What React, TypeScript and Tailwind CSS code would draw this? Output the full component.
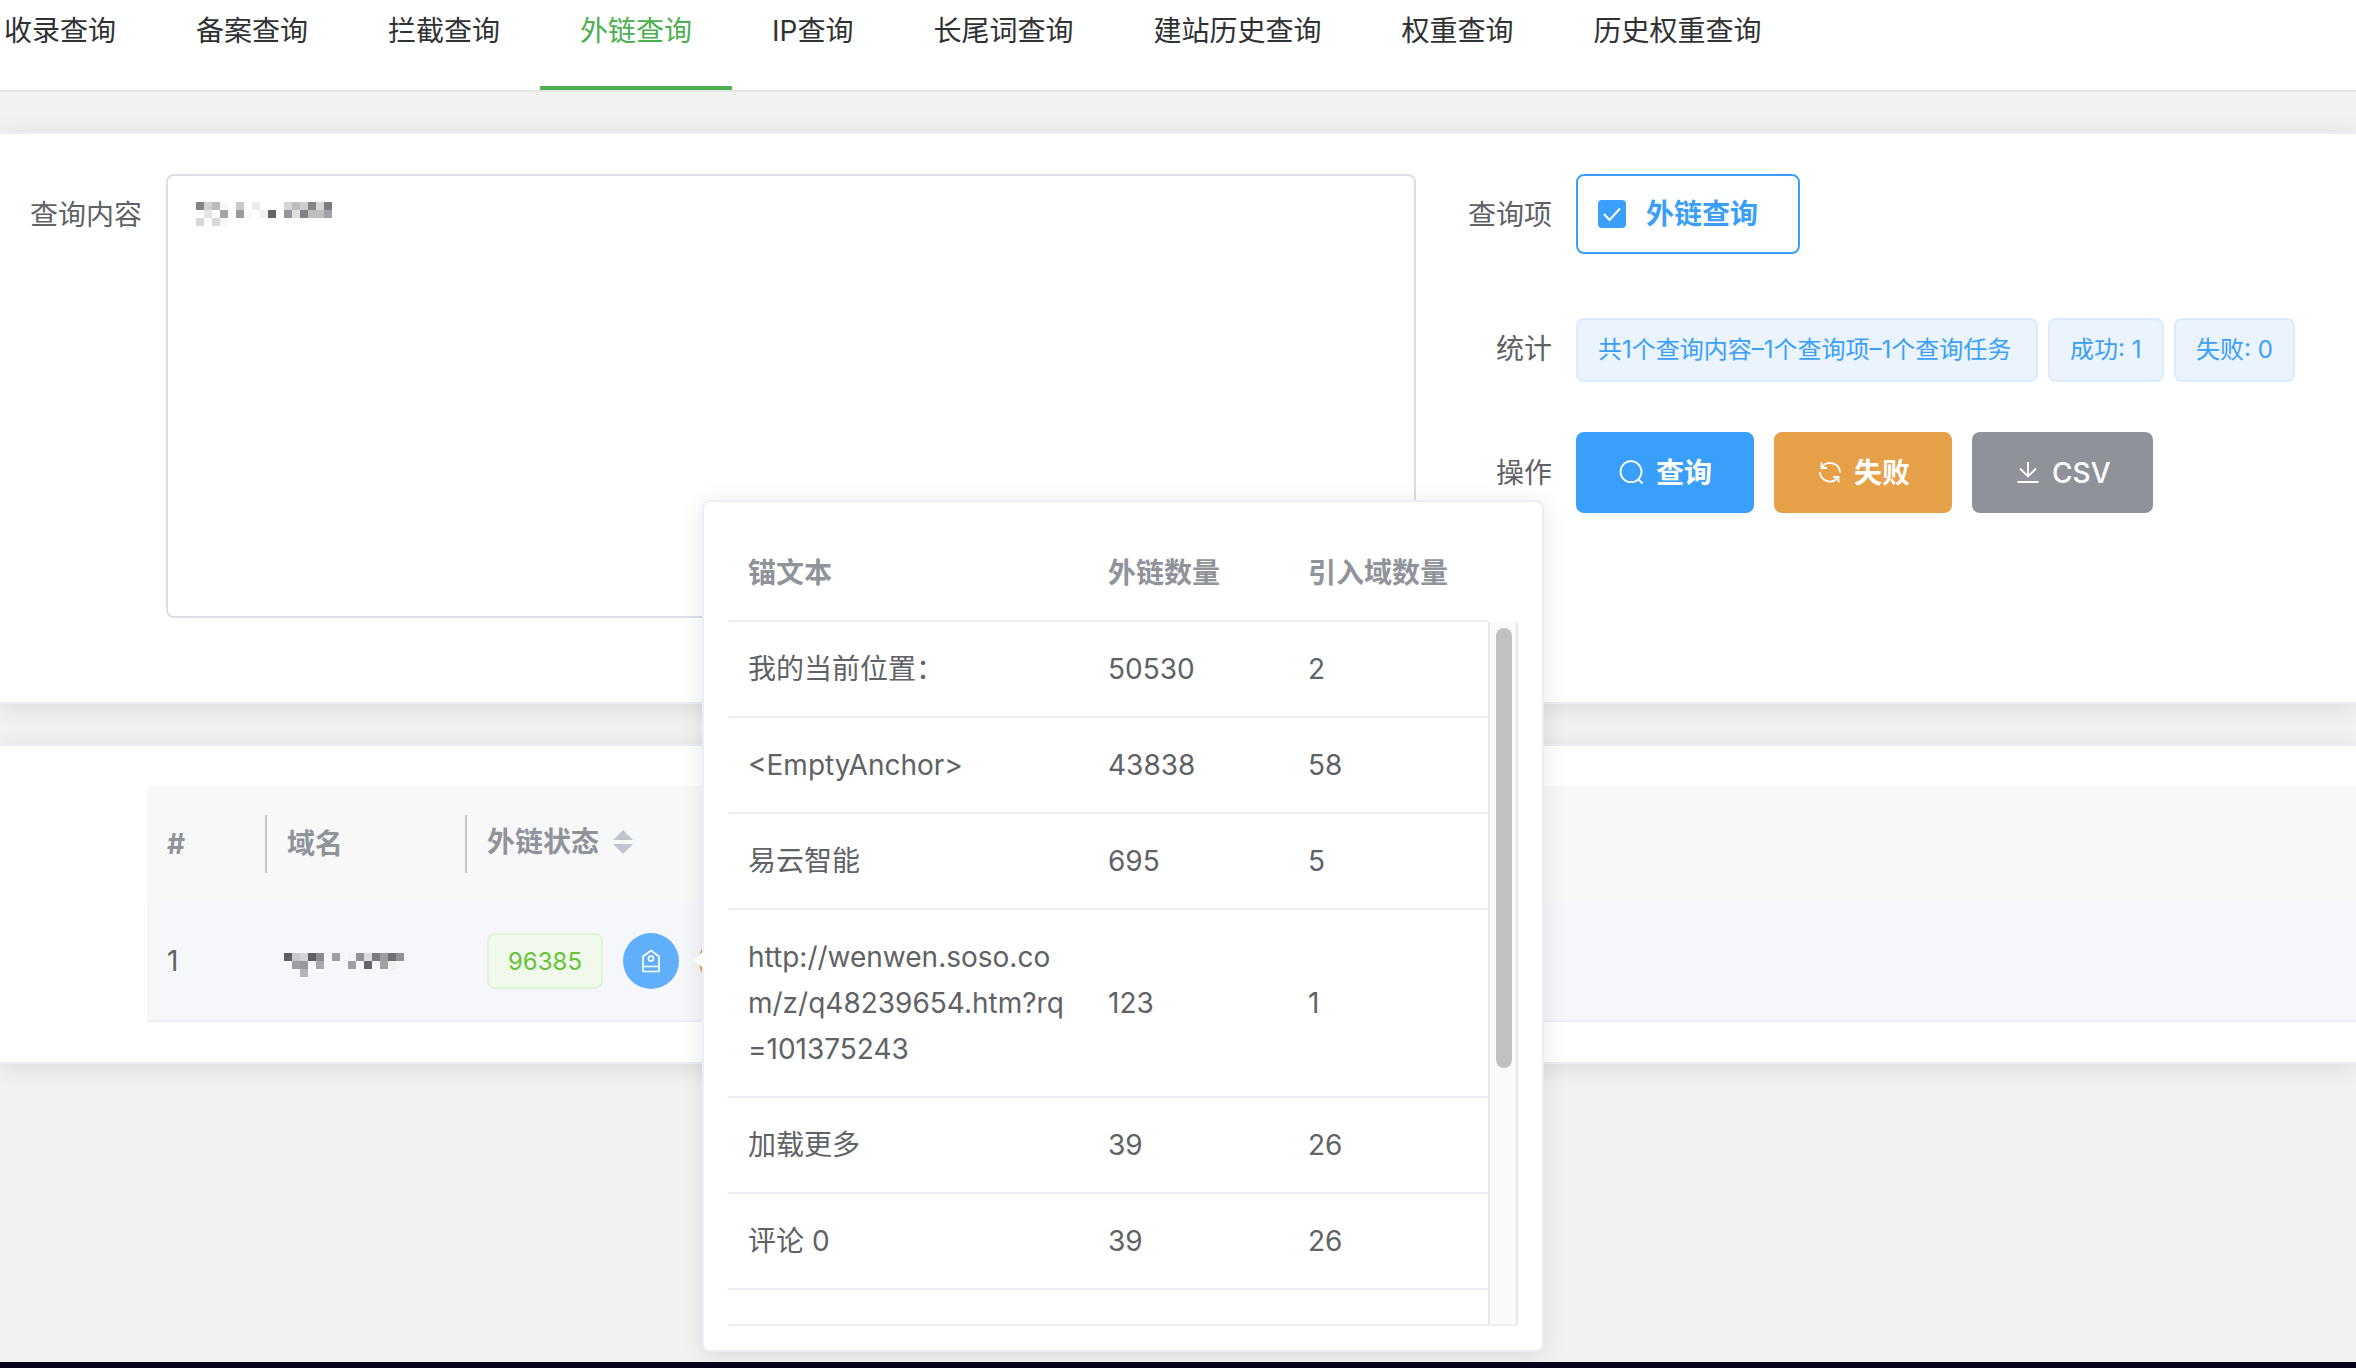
import React from "react";

const tabs = [
  "收录查询",
  "备案查询",
  "拦截查询",
  "外链查询",
  "IP查询",
  "长尾词查询",
  "建站历史查询",
  "权重查询",
  "历史权重查询",
];

const anchors = [
  { text: "我的当前位置：", links: "50530", domains: "2" },
  { text: "<EmptyAnchor>", links: "43838", domains: "58" },
  { text: "易云智能", links: "695", domains: "5" },
  { text: "http://wenwen.soso.com/z/q48239654.htm?rq=101375243", links: "123", domains: "1" },
  { text: "加载更多", links: "39", domains: "26" },
  { text: "评论 0", links: "39", domains: "26" },
];

type Cell = [number, number, string];

const contentMosaic: Cell[] = [
  [0, 0, "#858589"], [1, 0, "#d0d0d2"], [2, 0, "#bbbbbd"], [3, 0, "#f6f6f6"], [5, 0, "#c8c8ca"],
  [7, 0, "#ebebeb"], [11, 0, "#d5d5d7"], [12, 0, "#bdbdc0"], [13, 0, "#cdcdd0"], [14, 0, "#858589"],
  [15, 0, "#d5d5d7"], [16, 0, "#7c7d81"], [1, 1, "#e3e5e5"], [3, 1, "#a4a5a9"], [5, 1, "#9a9a9d"],
  [6, 1, "#f8f8f8"], [8, 1, "#f1f1f1"], [9, 1, "#636469"], [11, 1, "#949499"], [12, 1, "#e0e0e1"],
  [13, 1, "#818287"], [14, 1, "#bdbdc0"], [15, 1, "#bdbdc0"], [16, 1, "#a0a1a6"], [0, 2, "#d8d8da"],
  [2, 2, "#dadadc"], [3, 2, "#f8f8f8"],
];

const domainMosaic: Cell[] = [
  [0, 0, "#5f6065"], [1, 0, "#c8c8cb"], [2, 0, "#d3d3d6"], [3, 0, "#606166"], [4, 0, "#8c8c90"],
  [6, 0, "#a0a0a4"], [8, 0, "#f3f3f5"], [9, 0, "#929297"], [10, 0, "#dcdce0"], [11, 0, "#7a7a80"],
  [12, 0, "#9c9ca1"], [13, 0, "#717177"], [14, 0, "#929297"], [1, 1, "#a0a0a4"], [2, 1, "#9a9a9e"],
  [4, 1, "#a8a8ac"], [8, 1, "#a0a0a5"], [10, 1, "#66676c"], [12, 1, "#a0a0a5"], [13, 1, "#f0f0f3"],
  [2, 2, "#b5b5b9"],
];

function Mosaic({ cells, className }: { cells: Cell[]; className: string }) {
  return (
    <svg className={className} width="136" height="24" viewBox="0 0 136 24" shapeRendering="crispEdges" aria-hidden="true">
      {cells.map(([x, y, fill]) => (
        <rect key={`${x}-${y}`} x={x * 8} y={y * 8} width="8" height="8" fill={fill} />
      ))}
    </svg>
  );
}

function Icon({ children }: { children: React.ReactNode }) {
  return (
    <svg className="size-7 shrink-0" viewBox="0 0 28 28" fill="none" stroke="currentColor" strokeWidth="1.800" aria-hidden="true">
      {children}
    </svg>
  );
}

function FormRow({ label, className, children }: { label: string; className: string; children: React.ReactNode }) {
  return (
    <div className={`flex ${className}`}>
      <div className="w-40 shrink-0 pr-6 text-right leading-[82px]">{label}</div>
      {children}
    </div>
  );
}

function Tag({ className, children }: { className: string; children: React.ReactNode }) {
  return (
    <span
      className={`h-16 rounded-lg border-2 border-[#d8ebff] bg-[#ebf4fe] px-5 text-2xl leading-[60px] whitespace-nowrap text-[#3a9ffb] ${className}`}
    >
      {children}
    </span>
  );
}

function AnchorPopover() {
  return (
    <div
      role="dialog"
      aria-label="锚文本"
      className="absolute top-[500px] left-[702px] z-10 w-[842px] rounded-lg border-2 border-[#ebeef5] bg-white p-6 shadow-[0_4px_24px_rgba(0,0,0,0.1)]"
    >
      <svg className="absolute top-[448px] -left-[10px]" width="12" height="20" viewBox="0 0 12 20" aria-hidden="true">
        <path d="M12 0v20L10 19 1 11q-1-1 0-2L10 1z" fill="#fff" />
      </svg>
      <div className="relative h-[800px] overflow-hidden border-b-2 border-[#ebeef5]">
        <table className="w-[760px] table-fixed border-separate border-spacing-0 text-left">
          <thead className="text-[#909399]">
            <tr>
              <th className="w-[360px] border-b-2 border-[#ebeef5] px-5 py-6 leading-[46px] font-bold">锚文本</th>
              <th className="w-[200px] border-b-2 border-[#ebeef5] px-5 py-6 leading-[46px] font-bold">外链数量</th>
              <th className="w-[200px] border-b-2 border-[#ebeef5] px-5 py-6 leading-[46px] font-bold">引入域数量</th>
            </tr>
          </thead>
          <tbody>
            {anchors.map((a) => (
              <tr key={a.text}>
                <td className="border-b-2 border-[#ebeef5] px-5 py-6 leading-[46px] break-all">{a.text}</td>
                <td className="border-b-2 border-[#ebeef5] px-5 py-6 leading-[46px]">{a.links}</td>
                <td className="border-b-2 border-[#ebeef5] px-5 py-6 leading-[46px]">{a.domains}</td>
              </tr>
            ))}
          </tbody>
        </table>
        <div className="absolute top-24 right-0 bottom-0 w-[30px] border-x-2 border-[#e8e8e8] bg-[#fafafa] py-[6px] pr-1 pl-[6px]">
          <div className="h-[440px] rounded-full bg-[#c1c1c1]" />
        </div>
      </div>
    </div>
  );
}

export default function App() {
  return (
    <div className="relative flex min-h-screen flex-col overflow-hidden bg-[#f2f2f2] font-[Inter,'Noto_Sans_CJK_SC',sans-serif] text-[28px] text-[#606266]">
      <nav className="flex h-[92px] shrink-0 border-b-2 border-[#e6e6e6] bg-white text-[#303133]">
        {tabs.map((t, i) => (
          <a
            key={t}
            href="#"
            className={`h-[90px] pr-10 leading-[62px] whitespace-nowrap ${i === 0 ? "pl-1" : "pl-10"} ${
              i === 3 ? "border-b-4 border-[#4caf50] text-[#4caf50]" : ""
            }`}
          >
            {t}
          </a>
        ))}
      </nav>

      <section className="mt-10 grid grid-cols-[minmax(0,1fr)_940px] border-y-2 border-[#ebeef5] bg-white pt-10 pb-[84px] shadow-[0_4px_24px_rgba(0,0,0,0.1)]">
        <div className="flex">
          <label htmlFor="content" className="w-[166px] shrink-0 pr-6 text-right leading-[82px]">
            查询内容
          </label>
          <div className="relative flex-1">
            <textarea id="content" className="block h-[444px] w-full resize-none rounded-lg border-2 border-[#dcdfe6] bg-white px-7 py-2" />
            <Mosaic cells={contentMosaic} className="absolute top-7 left-[30px]" />
          </div>
        </div>
        <div>
          <FormRow label="查询项" className="mb-[52px]">
            <label className="flex h-20 w-56 items-center gap-5 rounded-lg border-2 border-[#3a9ffb] pl-5 font-bold text-[#3a9ffb]">
              <span className="relative size-7">
                <input type="checkbox" defaultChecked className="block size-7 appearance-none rounded bg-[#3a9ffb]" />
                <svg className="pointer-events-none absolute inset-0" width="28" height="28" viewBox="0 0 28 28" fill="none" stroke="#fff" strokeWidth="2" aria-hidden="true">
                  <path d="M6 14l5.500 6L22 8.500" />
                </svg>
              </span>
              外链查询
            </label>
          </FormRow>
          <FormRow label="统计" className="mb-[42px]">
            <div className="flex gap-[10px] pt-[10px]">
              <Tag className="min-w-[462px]">共1个查询内容–1个查询项–1个查询任务</Tag>
              <Tag className="min-w-[116px]">成功: 1</Tag>
              <Tag className="min-w-[121px]">失败: 0</Tag>
            </div>
          </FormRow>
          <FormRow label="操作" className="">
            <div className="flex gap-5 text-white">
              <button type="button" className="flex h-[81px] items-center gap-[10px] rounded-lg bg-[#3a9ffb] px-[42px] font-bold">
                <Icon>
                  <circle cx="13" cy="12.700" r="10.500" />
                  <path d="M20.500 20.500l4 4" />
                </Icon>
                查询
              </button>
              <button type="button" className="flex h-[81px] items-center gap-[10px] rounded-lg bg-[#e5a048] px-[42px] font-bold">
                <Icon>
                  <path d="M6 8.500A9.800 9.800 0 0 1 24 13.500M5.500 3.500v5.500h5.500M22 18A9.800 9.800 0 0 1 4 13M22.500 23.500v-5.500h-5.500" />
                </Icon>
                失败
              </button>
              <button type="button" className="flex h-[81px] items-center gap-[10px] rounded-lg bg-[#8f9299] px-[42px] font-medium">
                <Icon>
                  <path d="M14 3v14.500M6 9.500l8 8 8-8M3.500 23h21" />
                </Icon>
                CSV
              </button>
            </div>
          </FormRow>
        </div>
      </section>

      <section className="mt-10 border-y-2 border-[#ebeef5] bg-white py-10 pl-[147px] shadow-[0_4px_24px_rgba(0,0,0,0.1)]">
        <table className="w-full table-fixed border-separate border-spacing-0 text-left">
          <thead className="bg-[#f8f8f8] text-[#909399]">
            <tr className="h-[116px]">
              <th className="w-[120px] p-0 font-bold">
                <div className="h-[58px] border-r-2 border-[#c8c8c8] pl-5 leading-[58px]">#</div>
              </th>
              <th className="w-[200px] p-0 font-bold">
                <div className="h-[58px] border-r-2 border-[#c8c8c8] pl-5 leading-[58px]">域名</div>
              </th>
              <th className="p-0 font-bold">
                <div className="flex h-[58px] items-center gap-[14px] pb-1 pl-5">
                  外链状态
                  <svg width="20" height="24" viewBox="0 0 20 24" fill="#c0c4cc" aria-hidden="true">
                    <path d="M0 10L10 0l10 10zM0 14h20L10 24z" />
                  </svg>
                </div>
              </th>
            </tr>
          </thead>
          <tbody className="bg-[#f5f7fa]">
            <tr className="h-[120px]">
              <td className="border-b-2 border-[#ebeef5] p-0 pl-5">1</td>
              <td className="border-b-2 border-[#ebeef5] p-0 pt-2 pl-[17px]">
                <Mosaic cells={domainMosaic} className="block" />
              </td>
              <td className="border-b-2 border-[#ebeef5] p-0 pl-5">
                <div className="flex items-center gap-5">
                  <span className="h-14 w-[116px] rounded-lg border-2 border-[#e1f3d8] bg-[#f0f9eb] text-center text-2xl leading-[54px] text-[#67c23a]">
                    96385
                  </span>
                  <button type="button" aria-label="锚文本" className="flex size-14 items-center justify-center rounded-full bg-[#60affc] text-white">
                    <Icon>
                      <path d="M6 24.500V9.500L14 3.500l8 6v15zM6 19.500h16" strokeWidth="1.700" />
                      <circle cx="14" cy="11.500" r="2.500" strokeWidth="1.700" />
                    </Icon>
                  </button>
                  <button type="button" aria-label="更多" className="size-14 rounded-full bg-[#e5a048]" />
                </div>
              </td>
            </tr>
          </tbody>
        </table>
      </section>

      <footer className="mt-auto h-[6px] bg-[#08011a]" />
      <AnchorPopover />
    </div>
  );
}
